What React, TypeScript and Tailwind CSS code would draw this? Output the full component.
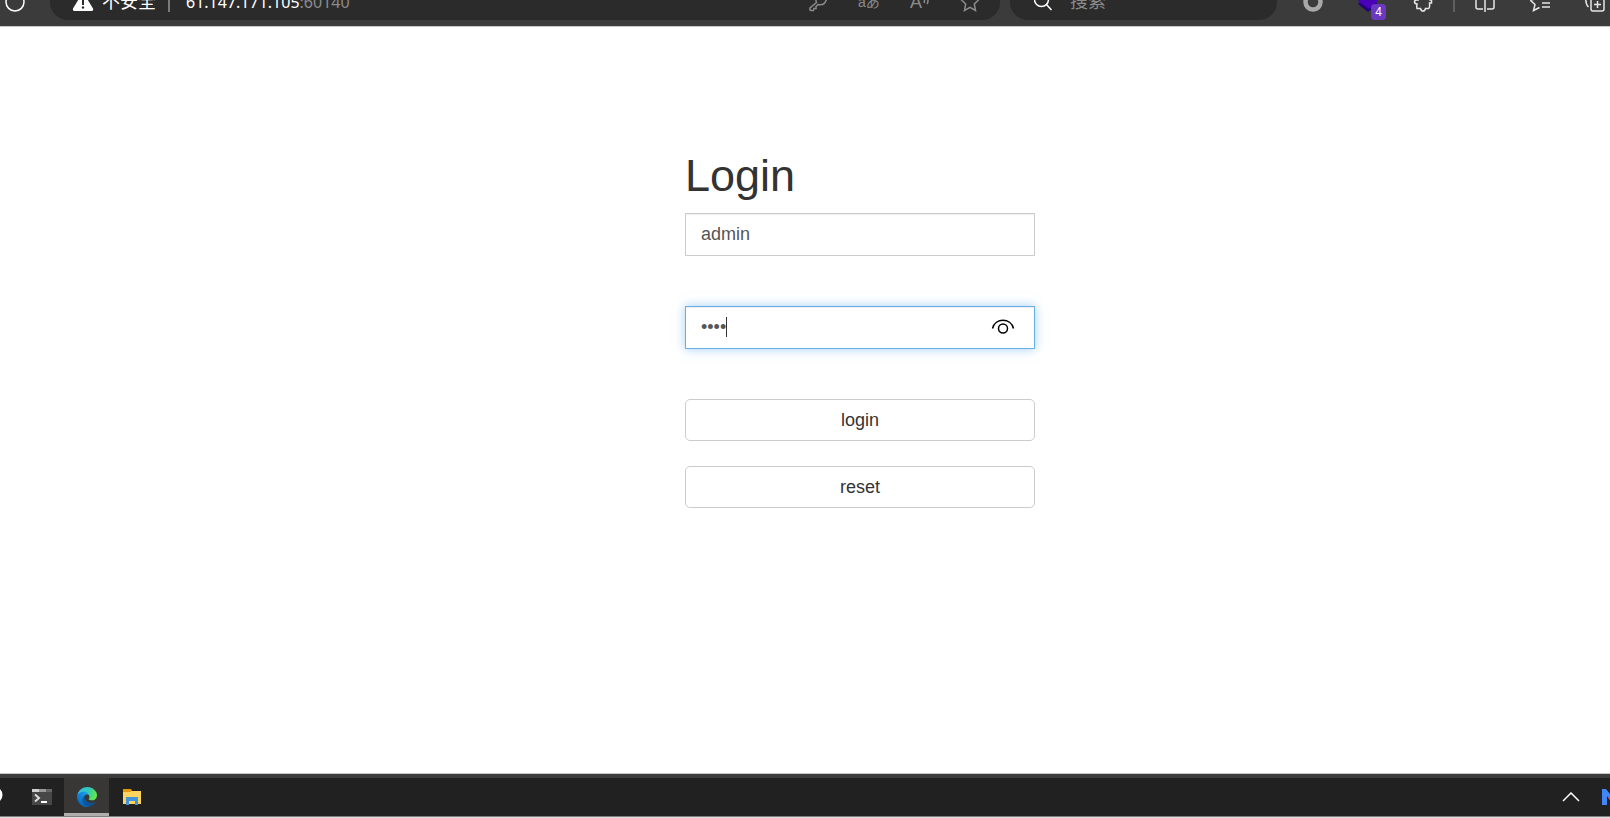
import { useState, type ReactNode } from "react";

const toolIcon = "h-5 w-5 shrink-0 fill-none stroke-[1.5]";

const AddressBar = () => (
  <div className="flex h-9 min-w-0 flex-1 items-center rounded-[18px] bg-[#2b2b2b] pl-[22px] pr-5">
    <svg viewBox="0 0 22 20" className="h-5 w-[22px] shrink-0">
      <path
        d="M11 0 L21 16.500 Q21.500 19 20 19 H2 Q0.500 19 1 16.500 Z"
        className="fill-white"
      />
      <path d="M11 6 V13" className="stroke-[#2b2b2b] stroke-[2]" />
      <circle cx="11" cy="15.500" r="1.200" className="fill-[#2b2b2b]" />
    </svg>
    <span className="ml-2 text-lg leading-5 text-white">不安全</span>
    <span className="ml-3 h-5 w-0.5 bg-[#7a7a7a]" />
    <span className="ml-4 flex-1 font-['Noto_Sans',sans-serif] text-base leading-5 text-white">
      61.147.171.105<span className="text-[#8b8b8b]">:60140</span>
    </span>
    <div className="flex items-center gap-[30px] stroke-[#8b8b8b]">
      <svg viewBox="0 0 20 20" className={toolIcon}>
        <path d="M8.500 10.500 L2 16 Q1.500 18.500 3 18.500 H5.500 L6 16.500 H8 V14.500 L10 12.500 Q17 14 18.500 7 A6 6 0 0 0 8 6 Q7.500 8 8.500 10.500 Z" />
      </svg>
      <span className="w-[22px] whitespace-nowrap text-sm leading-5 text-[#8b8b8b]">
        aあ
      </span>
      <span className="flex w-5 items-center text-lg leading-5 text-[#8b8b8b]">
        A
        <svg viewBox="0 0 8 20" className="h-5 w-2 fill-none stroke-[1.5]">
          <path d="M2 7 Q3 9 2 11 M5 6 Q7 9 5 12" />
        </svg>
      </span>
      <svg viewBox="0 0 20 20" className={toolIcon}>
        <path d="M10 1 L12.700 6.800 L19 7.500 L14.300 11.900 L15.500 18.500 L10 15.300 L4.500 18.500 L5.700 11.900 L1 7.500 L7.300 6.800 Z" />
      </svg>
    </div>
  </div>
);

const Extensions = () => (
  <div className="flex items-center gap-[35px]">
    <svg viewBox="0 0 20 20" className="h-5 w-5 fill-none">
      <circle
        cx="10"
        cy="10"
        r="7.500"
        className="stroke-[#a8a8a8] stroke-[4.5]"
      />
    </svg>
    <div className="relative h-5 w-5">
      <svg viewBox="0 0 20 20" className="h-5 w-5 stroke-none">
        <path d="M0 12 L10 3 L20 12 L10 20 Z" className="fill-[#23007a]" />
        <path d="M0 9 L10 0 L20 9 L11 17 Z" className="fill-[#4a00b8]" />
      </svg>
      <span className="absolute left-[13px] top-3 h-4 w-[15px] rounded bg-[#6b38c2] text-center text-xs leading-4 text-white">
        4
      </span>
    </div>
    <svg viewBox="0 0 20 20" className={toolIcon}>
      <path d="M5 3 H8 A2 2 0 0 1 12 3 H17 V8 H18.500 V11 H16.500 Q17 17 15 16.500 H12.500 Q12 19 10 19 Q8 19 7.500 16.500 H4 Q3.500 14 4 12 Q1.500 12 1.500 9.500 Q2 7.500 5 8 Z" />
    </svg>
  </div>
);

const BrowserActions = () => (
  <div className="flex items-center gap-[35px]">
    <svg viewBox="0 0 20 20" className={toolIcon}>
      <path d="M8 2 H1 V15 Q1 17 3 17 H8 M12 2 H19 V15 Q19 17 17 17 H12 M10 0 V20" />
    </svg>
    <svg viewBox="0 0 20 20" className={toolIcon}>
      <path d="M9 1 L6 7 L0 8 L5 12.500 L3.500 18.500 L9.500 15.500 M12 11 H20 M12 15 H20" />
    </svg>
    <svg viewBox="0 0 20 20" className={toolIcon}>
      <path d="M8 6 H17 Q19 6 19 8 V17 Q19 19 17 19 H8 Q6 19 6 17 V8 Q6 6 8 6 Z M12.500 9 V16 M9 12.500 H16 M3.500 15 Q0 12 1 4" />
    </svg>
  </div>
);

const BrowserToolbar = () => (
  <header className="flex h-[27px] items-end overflow-hidden border-b border-[#c8c8c8] bg-[#3b3b3b]">
    <div className="flex h-[42px] w-full shrink-0 items-center pb-1.5 pl-[5px]">
      <svg viewBox="0 0 20 20" className="mr-[25px] h-5 w-5 shrink-0">
        <circle
          cx="10"
          cy="10"
          r="9"
          className="fill-none stroke-white stroke-[1.5]"
        />
      </svg>
      <AddressBar />
      <div className="ml-2.5 flex h-9 w-[267px] items-center rounded-[18px] bg-[#2b2b2b] pl-6">
        <svg viewBox="0 0 20 20" className={`${toolIcon} stroke-white`}>
          <path d="M12 12 L17.500 18" />
          <circle cx="7.500" cy="7.500" r="7" />
        </svg>
        <span className="ml-4 text-lg leading-5 text-[#8b8b8b]">搜索</span>
      </div>
      <div className="flex w-[333px] shrink-0 items-center pl-[26px] stroke-[#e6e6e6]">
        <Extensions />
        <span className="mx-5 h-5 w-0.5 bg-[#5f5f5f]" />
        <BrowserActions />
      </div>
    </div>
  </header>
);

const fieldClass =
  "h-[43px] w-full border bg-white px-[15px] text-lg leading-6 text-[#555] outline-none";
const buttonClass =
  "h-[42px] w-full rounded-[5px] border border-[#ccc] bg-white text-lg leading-6 text-[#333]";

const LoginForm = () => {
  const [name, setName] = useState("admin");
  const [password, setPassword] = useState("1234");

  return (
    <form
      className="mx-auto flex w-[350px] flex-col"
      onSubmit={(e) => e.preventDefault()}
    >
      <h1 className="mb-3 text-[45px] leading-[50px] text-[#333]">Login</h1>
      <input
        aria-label="Username"
        value={name}
        onChange={(e) => setName(e.target.value)}
        className={`${fieldClass} border-[#ccc] shadow-[inset_0_1px_1px_rgba(0,0,0,0.075)]`}
      />
      <div className="relative mt-[50px]">
        <input
          type="password"
          aria-label="Password"
          value={password}
          onChange={(e) => setPassword(e.target.value)}
          className={`${fieldClass} border-[#66afe9] shadow-[inset_0_1px_1px_rgba(0,0,0,0.075),0_0_10px_rgba(102,175,233,0.6)]`}
        />
        <span className="absolute left-[41px] top-[11px] h-5 w-px bg-[#333]" />
        <button
          type="button"
          aria-label="Show password"
          className="absolute right-5 top-[11px]"
        >
          <svg
            viewBox="0 0 24 20"
            className="h-5 w-6 fill-none stroke-black stroke-[1.5]"
          >
            <path d="M1.500 11.500 C4 0.500 20 0.500 22.500 11.500" />
            <circle cx="12" cy="11.500" r="4.500" />
          </svg>
        </button>
      </div>
      <button type="submit" className={`${buttonClass} mt-[50px]`}>
        login
      </button>
      <button type="reset" className={`${buttonClass} mt-[25px]`}>
        reset
      </button>
    </form>
  );
};

const TerminalIcon = () => (
  <svg viewBox="0 0 20 16" className="h-4 w-5">
    <path d="M0 0 H20 V16 H0 Z" className="fill-[#474747]" />
    <path d="M0 0 H7 V3 H0 Z" className="fill-[#cfcfcf]" />
    <path d="M7 0 H14 V3 H7 Z" className="fill-[#9a9a9a]" />
    <path d="M14 0 H20 V3 H14 Z" className="fill-[#666]" />
    <path
      d="M3 5.500 L7 9 L3 12.500"
      className="fill-none stroke-[#ddd] stroke-2"
    />
    <path d="M9 13 H15" className="stroke-white stroke-2" />
  </svg>
);

const EdgeIcon = () => (
  <svg viewBox="0 0 256 256" className="h-5 w-5">
    <defs>
      <linearGradient id="edge-base" x1="0.2" y1="0.5" x2="1" y2="0.6">
        <stop offset="0" stopColor="#0c59a4" />
        <stop offset="1" stopColor="#114a8b" />
      </linearGradient>
      <linearGradient id="edge-left" x1="0.8" y1="0.2" x2="0.3" y2="0.9">
        <stop offset="0" stopColor="#1b9de2" />
        <stop offset="0.5" stopColor="#1382d8" />
        <stop offset="1" stopColor="#0067bf" />
      </linearGradient>
      <linearGradient id="edge-wave" x1="0" y1="0.3" x2="1" y2="0.6">
        <stop offset="0" stopColor="#35c1f1" />
        <stop offset="0.5" stopColor="#2fc7b8" />
        <stop offset="1" stopColor="#66eb3f" />
      </linearGradient>
    </defs>
    <path
      fill="url(#edge-base)"
      d="M231 190.500a93.700 93.700 0 0 1-10.500 4.700 101.900 101.900 0 0 1-35.900 6.400c-47.300 0-88.500-32.500-88.500-74.300a31.500 31.500 0 0 1 16.400-27.300c-42.800 1.800-53.800 46.400-53.800 72.500 0 73.900 68.100 81.400 82.800 81.400 7.900 0 19.800-2.300 27-4.600l1.300-.4a128.300 128.300 0 0 0 66.600-52.800 4 4 0 0 0-5.400-5.600z"
    />
    <path
      fill="url(#edge-left)"
      d="M105.700 241.400A79.200 79.200 0 0 1 83 220.100a80.700 80.700 0 0 1 29.500-120c3.200-1.500 8.500-4.100 15.600-4a32.400 32.400 0 0 1 25.700 13 31.900 31.900 0 0 1 6.300 18.700c0-.2 24.500-79.600-80-79.600-43.900 0-80 41.600-80 78.200a130.100 130.100 0 0 0 12.100 56 128 128 0 0 0 156.400 67.100 75.500 75.500 0 0 1-62.800-8z"
    />
    <path
      fill="url(#edge-wave)"
      d="M152.300 148.900c-.8 1-3.300 2.500-3.300 5.600 0 2.600 1.700 5.100 4.700 7.200 14.400 10 41.500 8.700 41.600 8.700a59.600 59.600 0 0 0 30.300-8.300 61.400 61.400 0 0 0 30.400-52.900c.3-22.400-8-37.300-11.300-43.900C223.500 23.800 177.700 0 128 0A128 128 0 0 0 0 126.200c.5-36.500 36.800-66 80-66 3.500 0 23.500.3 42 10 16.300 8.600 24.900 18.900 30.900 29.200 6.200 10.700 7.200 24.100 7.200 29.500s-2.700 13.300-7.800 20z"
    />
  </svg>
);

const FolderIcon = () => (
  <svg viewBox="0 0 18 16" className="h-4 w-[18px]">
    <path d="M0 0 H8 L9 2 V4 H0 Z" className="fill-[#e39b0b]" />
    <path d="M0 3 H7 L9 2 H18 V15 H0 Z" className="fill-[#ffd45c]" />
    <path d="M3 8 H15 V16 H12 V12 H6 V16 H3 Z" className="fill-[#3f94dc]" />
  </svg>
);

const TaskButton = ({
  label,
  active,
  children,
}: {
  label: string;
  active?: boolean;
  children: ReactNode;
}) => (
  <button
    aria-label={label}
    className={`flex h-full w-[45px] items-center justify-center ${
      active ? "bg-[#393735] shadow-[inset_0_-3px_#b0aeac]" : ""
    }`}
  >
    {children}
  </button>
);

const Taskbar = () => (
  <footer className="border-t border-[#c8c8c8]">
    <div className="h-1 bg-[#3b3b3b]" />
    <div className="flex h-[38px] items-center overflow-hidden bg-[#212121]">
      <svg viewBox="0 0 19 20" className="h-5 w-[19px] shrink-0">
        <circle
          cx="-6"
          cy="8"
          r="7"
          className="fill-none stroke-white stroke-[3]"
        />
      </svg>
      <TaskButton label="Terminal">
        <TerminalIcon />
      </TaskButton>
      <TaskButton label="Edge" active>
        <EdgeIcon />
      </TaskButton>
      <TaskButton label="Files">
        <FolderIcon />
      </TaskButton>
      <button aria-label="Show hidden icons" className="ml-auto mr-[22px]">
        <svg
          viewBox="0 0 18 10"
          className="h-2.5 w-[18px] fill-none stroke-white stroke-[1.5]"
        >
          <path d="M1 9 L9 1 L17 9" />
        </svg>
      </button>
      <svg viewBox="0 0 8 16" className="h-4 w-2 shrink-0">
        <path d="M0 0 H4 L8 5 V11 L5 7 V16 H0 Z" className="fill-[#4285f4]" />
        <path d="M6 9 L8 8 V11 Z" className="fill-[#ea4335]" />
      </svg>
    </div>
    <div className="h-0.5 border-b border-[#dcdcdc] bg-[#7f7f7f]" />
  </footer>
);

export default function App() {
  return (
    <div className="flex min-h-screen flex-col bg-white font-['Liberation_Sans','Noto_Sans_CJK_SC',sans-serif]">
      <BrowserToolbar />
      <main className="flex-1 pl-[110px] pt-[124px]">
        <LoginForm />
      </main>
      <Taskbar />
    </div>
  );
}
